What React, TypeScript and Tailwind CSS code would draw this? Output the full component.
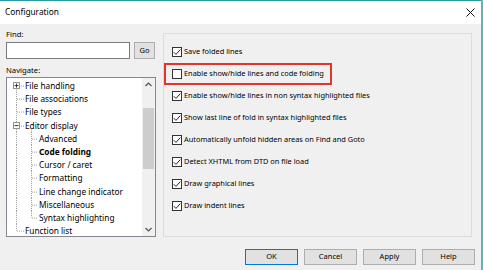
import React from "react";

const FONT = { fontFamily: '"Noto Sans", "Open Sans", sans-serif' };

function Check({ checked }: { checked: boolean }) {
  return (
    <svg width="10" height="10" viewBox="0 0 10 10" className="shrink-0">
      <rect x="0.5" y="0.5" width="9" height="9" fill="#ffffff" stroke="#333333" strokeWidth="1" />
      {checked && (
        <path d="M1.8 5.2 L4 7.4 L8.3 2.6" fill="none" stroke="#222222" strokeWidth="1" />
      )}
    </svg>
  );
}

type Row = {
  label: string;
  level: 0 | 1;
  exp?: "+" | "-";
  bold?: boolean;
  first?: boolean;
  lastChild?: boolean;
  last?: boolean;
};

const rows: Row[] = [
  { label: "File handling", level: 0, exp: "+", first: true },
  { label: "File associations", level: 0 },
  { label: "File types", level: 0 },
  { label: "Editor display", level: 0, exp: "-" },
  { label: "Advanced", level: 1 },
  { label: "Code folding", level: 1, bold: true },
  { label: "Cursor / caret", level: 1 },
  { label: "Formatting", level: 1 },
  { label: "Line change indicator", level: 1 },
  { label: "Miscellaneous", level: 1 },
  { label: "Syntax highlighting", level: 1, lastChild: true },
  { label: "Function list", level: 0, last: true },
];

const H = 13.2;
const MID = 6.6;

function Gutter({ r }: { r: Row }) {
  const dash = "1 1";
  const c = "#a0a0a0";
  if (r.level === 0) {
    return (
      <svg width="18" height={H} className="shrink-0">
        <line x1="9.5" y1={r.first ? MID : 0} x2="9.5" y2={r.last ? MID : H} stroke={c} strokeDasharray={dash} />
        <line x1="10" y1={MID + 0.5} x2="17" y2={MID + 0.5} stroke={c} strokeDasharray={dash} />
        {r.exp && (
          <g>
            <rect x="6.5" y={MID - 3} width="6" height="6" fill="#ffffff" stroke="#909090" />
            <line x1="7.5" y1={MID} x2="11.5" y2={MID} stroke="#333" />
            {r.exp === "+" && <line x1="9.5" y1={MID - 2} x2="9.5" y2={MID + 2} stroke="#333" />}
          </g>
        )}
      </svg>
    );
  }
  return (
    <svg width="32" height={H} className="shrink-0">
      <line x1="9.5" y1="0" x2="9.5" y2={H} stroke={c} strokeDasharray={dash} />
      <line x1="24.5" y1="0" x2="24.5" y2={r.lastChild ? MID : H} stroke={c} strokeDasharray={dash} />
      <line x1="25" y1={MID + 0.5} x2="31" y2={MID + 0.5} stroke={c} strokeDasharray={dash} />
    </svg>
  );
}

function Tree() {
  return (
    <div className="mt-[1px] h-[160px] w-[150px] border border-[#828790] bg-white flex">
      <div className="flex-1 pt-[1px] overflow-hidden">
        {rows.map((r, i) => (
          <div key={i} className="flex items-center h-[13.2px]">
            <div className="relative">
              <Gutter r={r} />
              {r.exp === "-" && (
                <svg width="32" height={H} className="absolute left-0 top-0">
                  <line x1="24.5" y1={MID + 3} x2="24.5" y2={H} stroke="#a0a0a0" strokeDasharray="1 1" />
                </svg>
              )}
            </div>
            <span
              className={`text-[8.3px] leading-[13px] whitespace-nowrap text-black ${r.bold ? "font-bold" : ""}`}
            >
              {r.label}
            </span>
          </div>
        ))}
      </div>
      <div className="w-[13px] bg-[#f0f0f0] flex flex-col">
        <div className="h-[13px] flex items-center justify-center">
          <svg width="7" height="5" viewBox="0 0 7 5">
            <path d="M0.5 4 L3.5 1 L6.5 4" fill="none" stroke="#505050" strokeWidth="1.2" />
          </svg>
        </div>
        <div className="h-[17px]" />
        <div className="h-[61px] mx-[1px] bg-[#cdcdcd]" />
        <div className="flex-1" />
        <div className="h-[13px] flex items-center justify-center">
          <svg width="7" height="5" viewBox="0 0 7 5">
            <path d="M0.5 1 L3.5 4 L6.5 1" fill="none" stroke="#505050" strokeWidth="1.2" />
          </svg>
        </div>
      </div>
    </div>
  );
}

const options: { label: string; checked: boolean; red?: boolean }[] = [
  { label: "Save folded lines", checked: true },
  { label: "Enable show/hide lines and code folding", checked: false, red: true },
  { label: "Enable show/hide lines in non syntax highlighted files", checked: true },
  { label: "Show last line of fold in syntax highlighted files", checked: true },
  { label: "Automatically unfold hidden areas on Find and Goto", checked: true },
  { label: "Detect XHTML from DTD on file load", checked: true },
  { label: "Draw graphical lines", checked: true },
  { label: "Draw indent lines", checked: true },
];

function Btn({ label, def }: { label: string; def?: boolean }) {
  return (
    <div
      className={`w-[53px] h-[16px] flex items-center justify-center bg-[#e1e1e1] border text-[7.5px] text-black ${
        def ? "border-[#0078d7]" : "border-[#adadad]"
      }`}
    >
      {label}
    </div>
  );
}

export default function App() {
  return (
    <div className="w-[483px] h-[270px] flex overflow-hidden bg-[#f0f0f0]" style={FONT}>
      <div className="w-[481px] h-full flex flex-col border-t border-[#2a9aa4]">
        <div className="h-[23px] bg-white flex items-center justify-between pl-[5px] pr-[6px]">
          <span className="text-[8.3px] text-black">Configuration</span>
          <svg width="9" height="9" viewBox="0 0 9 9">
            <path d="M0.5 0.5 L8.5 8.5 M8.5 0.5 L0.5 8.5" stroke="#111" strokeWidth="1" />
          </svg>
        </div>
        <div className="flex-1 flex flex-col bg-[#f0f0f0]">
          <div className="flex pl-[6px]">
            <div className="w-[150px] flex flex-col pt-[4px]">
              <div className="h-[12px] text-[7.7px] leading-[12px] text-black">Find:</div>
              <div className="mt-[2px] flex h-[17px]">
                <div className="w-[124px] h-full bg-white border border-[#7a7a7a]" />
                <div className="ml-[4px] w-[21px] h-full bg-[#e1e1e1] border border-[#adadad] flex items-center justify-center text-[7.5px] text-black">
                  Go
                </div>
              </div>
              <div className="mt-[5px] h-[12px] text-[7.7px] leading-[12px] text-black">Navigate:</div>
              <Tree />
            </div>
            <div className="ml-[7px] mt-[9px] w-[309px] h-[204px] border border-[#dcdcdc] pt-[7px]">
              {options.map((o, i) => (
                <div
                  key={i}
                  className={`h-[22px] flex items-center gap-[2px] ${
                    o.red ? "w-[168px] border-2 border-[#e0352b] pl-[6px]" : "pl-[8px]"
                  }`}
                >
                  <Check checked={o.checked} />
                  <span className="text-[7.4px] whitespace-nowrap text-black">{o.label}</span>
                </div>
              ))}
            </div>
          </div>
          <div className="mt-[12px] flex justify-end gap-[6px] pr-[6px]">
            <Btn label="OK" def />
            <Btn label="Cancel" />
            <Btn label="Apply" />
            <Btn label="Help" />
          </div>
        </div>
      </div>
      <div className="w-[2px] h-full bg-[#5fb3b8]" />
    </div>
  );
}
